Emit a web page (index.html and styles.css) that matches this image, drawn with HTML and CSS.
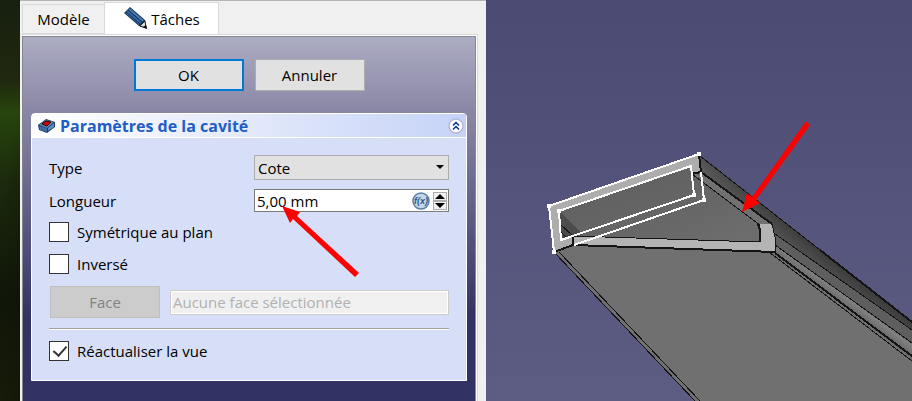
FILE: index.html
```html
<!DOCTYPE html>
<html lang="fr">
  <head>
    <meta charset="UTF-8" />
    <meta name="viewport" content="width=device-width, initial-scale=1.0" />
    <title>Paramètres de la cavité</title>
    <link rel="stylesheet" href="styles.css">
  </head>
  <body>
    <div class="desktop-edge"></div>
    <div class="panel">
      <div class="tabs">
        <button class="tab">Modèle</button>
        <button class="tab active">
          <svg class="pencil" width="24" height="24" viewBox="0 0 24 24">
            <path d="M1 6 7 0 22 13 24 22 16 19Z" fill="#14304f" />
            <path d="M2 6 7 1 21 13 16 18Z" fill="#3466a0" />
            <path d="M3 5 17 17M5 3 19 15" stroke="#14304f" stroke-width="1" />
            <path d="M6 2 20 14" stroke="#5c8bc0" stroke-width="1" />
            <path d="M17 19 22 14 23 21Z" fill="#e8e0d0" stroke="#222" stroke-width="1" />
            <path d="M20 20 23 18 24 22Z" fill="#111" />
          </svg>
          Tâches
        </button>
      </div>
      <div class="pane">
        <form class="task">
          <div class="actions">
            <button type="button" class="btn default">OK</button>
            <button type="button" class="btn">Annuler</button>
          </div>
          <section class="group">
            <header class="group-header">
              <svg width="18" height="16" viewBox="0 0 18 16">
                <path d="M0 7 8 1 17 4 17 9 9 15 1 12Z" fill="#1c3a5c" />
                <path d="M1 7 8 2 16 4 9 10Z" fill="#5584b8" />
                <path d="M1 8 9 10 9 14 2 12Z" fill="#3d6a9c" />
                <path d="M10 10 16 5 16 9 10 13Z" fill="#5a8ac0" />
                <path d="M4 6 8 3 13 4 9 8Z" fill="#d00000" stroke="#400" stroke-width="1" />
              </svg>
              <h1>Paramètres de la cavité</h1>
              <button type="button" class="collapse" aria-label="Réduire">
                <svg width="16" height="16" viewBox="0 0 16 16">
                  <circle cx="8" cy="8" r="7" fill="#fff" stroke="#b4b9d8" stroke-width="1.5" />
                  <path d="M5 7.500 8 4.500 11 7.500M5 11.500 8 8.500 11 11.500" fill="none" stroke="#00309c" stroke-width="1.500" />
                </svg>
              </button>
            </header>
            <div class="group-body">
              <div class="row">
                <label for="type">Type</label>
                <div class="field">
                  <select id="type">
                    <option>Cote</option>
                  </select>
                  <svg class="caret" width="8" height="4" viewBox="0 0 8 4"><path d="M0 0H8L4 4Z" /></svg>
                </div>
              </div>
              <div class="row">
                <label for="length">Longueur</label>
                <div class="field spin">
                  <input id="length" type="text" value="5,00 mm" />
                  <svg width="18" height="18" viewBox="0 0 18 18">
                    <circle cx="9" cy="9" r="8" fill="#c3d6ea" stroke="#5d7fa6" stroke-width="1.5" />
                    <text class="fx" x="9" y="12" text-anchor="middle">f(x)</text>
                  </svg>
                  <div class="steps">
                    <button type="button" aria-label="Augmenter"><svg width="10" height="5" viewBox="0 0 10 5"><path d="M0 5H10L5 0Z" /></svg></button>
                    <button type="button" aria-label="Diminuer"><svg width="10" height="5" viewBox="0 0 10 5"><path d="M0 0H10L5 5Z" /></svg></button>
                  </div>
                </div>
              </div>
              <label class="check"><input type="checkbox" /> Symétrique au plan</label>
              <label class="check"><input type="checkbox" /> Inversé</label>
              <div class="face-row">
                <button type="button" class="btn" disabled>Face</button>
                <input type="text" aria-label="Face" placeholder="Aucune face sélectionnée" disabled />
              </div>
              <hr />
              <label class="check"><input type="checkbox" checked /> Réactualiser la vue</label>
            </div>
          </section>
        </form>
      </div>
      <svg class="pointer" width="80" height="74" viewBox="280 204 80 74">
        <path d="M282 206 300 212 297 216 359 273 355 277 293 219 290 223Z" />
      </svg>
    </div>
    <main class="view">
      <svg viewBox="486 0 426 401" preserveAspectRatio="xMinYMin slice" role="img" aria-label="Vue 3D">
        <defs>
          <linearGradient id="outer" gradientUnits="userSpaceOnUse" x1="790" y1="244" x2="806" y2="223">
            <stop offset="0" stop-color="#5c5c5c" />
            <stop offset="1" stop-color="#2a2a2a" />
          </linearGradient>
          <linearGradient id="shade" gradientUnits="userSpaceOnUse" x1="700" y1="156" x2="880" y2="300">
            <stop offset="0" stop-color="#666" stop-opacity="0.500" />
            <stop offset="0.500" stop-color="#333" stop-opacity="0.300" />
            <stop offset="1" stop-color="#222" stop-opacity="0.300" />
          </linearGradient>
          <linearGradient id="lip" gradientUnits="userSpaceOnUse" x1="830" y1="295" x2="842" y2="279">
            <stop offset="0" stop-color="#6a6a6a" />
            <stop offset="0.400" stop-color="#808080" />
            <stop offset="1" stop-color="#626262" />
          </linearGradient>
          <linearGradient id="inside" x1="0" y1="0" x2="1" y2="1">
            <stop offset="0" stop-color="#5c5c5c" />
            <stop offset="1" stop-color="#6e6e6e" />
          </linearGradient>
        </defs>
        <g class="solid">
          <path d="M554 252 573 245 775 252 912 356V401H695Z" fill="#707070" />
          <path d="M699 154 912 322V358L775 253 772 224 701 172Z" fill="#5e5e5e" />
          <path d="M700 155 912 322V330L775 234 772 224 701 172Z" fill="url(#outer)" />
          <path d="M700 155 912 322V330L775 234 772 224 701 172Z" fill="url(#shade)" />
          <path d="M775 245 912 343V356L775 253Z" fill="url(#lip)" />
          <path d="M559 211 691 166 701 172 760 225 760 242 573 236 561 240Z" fill="url(#inside)" />
          <path d="M560 212 584 235 573 236 561 239Z" fill="#4c4c4c" />
          <path d="M692 173 701 172 772 224 758 225Z" fill="#717171" />
          <path d="M549 206 699 154 701 172 692 173 691 166 559 211 561 240 573 236V245L554 252Z" fill="#adadad" />
          <path d="M573 236 760 242 758 224H772L775 237V253L573 245Z" fill="#b4b4b4" />
        </g>
        <g class="edges">
          <path d="M700 156 912 322M693 175 760 225M775 234 912 330M775 245 912 343M769 252 912 361M560 224 573 236M560 231 567 238" />
          <path d="M573 236 760 242M772 224 775 237V253" />
          <path d="M554 252 695 401M559 252 700 401" />
        </g>
        <g class="edges thick">
          <path d="M699 154 701 172M691 174 701 172 772 224M775 253 912 356M775 252 573 245 554 252M573 236V245M760 242V230L758 224" />
          <path d="M820 250 912 322" />
        </g>
        <g class="sketch">
          <path d="M701 172 704 200 574 245M554 252 549 206 699 154M691 166 559 211 561 240 694 195Z" />
          <path class="nodes" d="M547 204h4v4h-4zM697 152h4v4h-4zM702 198h4v4h-4zM552 250h4v4h-4zM557 209h4v4h-4zM692 193h4v4h-4z" />
        </g>
        <path class="arrow" d="M742 212 747 193 752 197 806 121 810 125 756 200 760 203Z" />
      </svg>
    </main>
  </body>
</html>
```

FILE: styles.css
```css
:root {
  --face: #e1e1e1;
  --line: #adadad;
  --group: #d6dff7;
  --accent: #0078d7;
}
* {
  box-sizing: border-box;
  margin: 0;
  padding: 0;
}
body {
  display: flex;
  min-height: 100vh;
  font-family: "Open Sans", "Noto Sans", sans-serif;
  font-size: 15px;
  line-height: 20px;
  color: #000;
  background: #f0f0f0;
}
button,
input,
select {
  font: inherit;
  color: inherit;
}
svg {
  display: block;
  flex: none;
}
.desktop-edge {
  flex: 0 0 20px;
  background: linear-gradient(100deg, rgba(0, 0, 0, 0) 40%, rgba(15, 15, 5, 0.6)), linear-gradient(#17200f, #20280f 20%, #27450c 28%, #1b2a0c 45%, #10180a 75%, #1a240c);
}
.panel {
  flex: 0 0 466px;
  position: relative;
  display: flex;
  flex-direction: column;
  padding: 1px 8px 0 2px;
  border-top: 1px solid #b4b4b4;
}
.tabs {
  display: flex;
  align-items: flex-end;
  height: 32px;
}
.tab {
  display: flex;
  align-items: center;
  justify-content: center;
  gap: 4px;
  width: 82px;
  height: 30px;
  background: #f0f0f0;
  border: 1px solid #d9d9d9;
  border-right: none;
}
.tab.active {
  width: 115px;
  height: 32px;
  background: #fff;
  border: 1px solid #d9d9d9;
  border-bottom: none;
}
.pane {
  flex: 1;
  padding: 1px 1px 0 0;
  background: #fff;
  border-top: 1px solid #d9d9d9;
  border-right: 1px solid #d9d9d9;
}
.task {
  min-height: 100%;
  padding: 22px 8px 20px;
  border: 1px solid #828790;
  border-bottom: none;
  background: linear-gradient(#acacc2, #8a87a6 75px, #333264 280px);
}
.actions {
  display: flex;
  justify-content: center;
  gap: 11px;
  margin-bottom: 22px;
}
.btn {
  width: 110px;
  height: 32px;
  background: var(--face);
  border: 1px solid var(--line);
}
.btn.default {
  border: 2px solid var(--accent);
}
.btn:disabled {
  background: #ccc;
  border-color: #bfbfbf;
  color: #838383;
}
.group {
  background: var(--group);
  border: 1px solid #fff;
  border-radius: 4px 4px 0 0;
}
.group-header {
  display: flex;
  align-items: center;
  gap: 4px;
  height: 24px;
  padding: 0 2px 0 6px;
  background: linear-gradient(90deg, #fff, #c6d3f7);
  border-bottom: 1px solid #fff;
}
.group-header h1 {
  flex: 1;
  font-size: 16px;
  font-weight: bold;
  color: #215dc6;
}
.collapse {
  background: none;
  border: none;
}
.group-body {
  padding: 17px 17px 19px;
}
.row {
  display: flex;
  align-items: center;
  justify-content: space-between;
  margin-bottom: 9px;
}
.row + .check {
  margin-top: 10px;
}
.field {
  position: relative;
  width: 195px;
}
.field select {
  display: block;
  appearance: none;
  width: 100%;
  height: 25px;
  padding: 0 3px;
  background: var(--face);
  border: 1px solid var(--line);
  border-radius: 0;
}
.caret {
  position: absolute;
  top: 10px;
  right: 5px;
  pointer-events: none;
}
.spin {
  display: flex;
  align-items: center;
  gap: 3px;
  height: 23px;
  padding: 1px;
  background: #fff;
  border: 1px solid #7a7a7a;
}
.spin input {
  flex: 1;
  min-width: 0;
  height: 20px;
  padding-left: 1px;
  border: none;
  background: none;
}
.fx {
  font: italic bold 9px "Liberation Sans", sans-serif;
  fill: #2d5688;
}
.steps {
  display: flex;
  flex-direction: column;
}
.steps button {
  display: flex;
  align-items: center;
  justify-content: center;
  width: 14px;
  height: 9px;
  background: #f0f0f0;
  border: 1px solid var(--line);
}
.check {
  display: flex;
  align-items: center;
  gap: 8px;
  height: 20px;
  margin-bottom: 12px;
}
.check:last-child {
  margin-bottom: 0;
}
.check input {
  appearance: none;
  width: 20px;
  height: 20px;
  background: #fff;
  border: 1px solid #333;
}
.check input:checked::after {
  content: "";
  display: block;
  width: 6px;
  height: 11px;
  margin: 1px 0 0 6px;
  border: solid #333;
  border-width: 0 2px 2px 0;
  transform: rotate(42deg);
}
.face-row {
  display: flex;
  align-items: center;
  gap: 10px;
  padding-left: 1px;
}
.face-row input {
  flex: 1;
  min-width: 0;
  height: 25px;
  padding: 0 2px;
  background: #f0f0f0;
  border: 1px solid #ccc;
  box-shadow: inset 0 0 0 1px #fff;
}
.face-row input::placeholder {
  color: #b0b0b0;
}
hr {
  height: 2px;
  margin: 10px 0 11px;
  border: none;
  border-top: 1px solid #a0a0a0;
  border-bottom: 1px solid #fff;
}
/* annotation arrow, drawn over the form */
.pointer {
  position: absolute;
  top: 203px;
  left: 260px;
  fill: #f00;
  pointer-events: none;
}
.view {
  flex: 1;
  min-width: 0;
  position: relative;
  background: linear-gradient(#4b4a73, #5d5d84);
}
.view > svg {
  position: absolute;
  width: 100%;
  height: 100%;
}
.solid,
.edges,
.sketch {
  shape-rendering: crispEdges;
}
.edges {
  fill: none;
  stroke: #141414;
  stroke-width: 1px;
}
.thick {
  stroke-width: 2px;
}
.sketch {
  fill: none;
  stroke: #fff;
  stroke-width: 2px;
}
.nodes {
  fill: #fff;
  stroke: none;
}
.arrow {
  fill: #f00;
}
```
